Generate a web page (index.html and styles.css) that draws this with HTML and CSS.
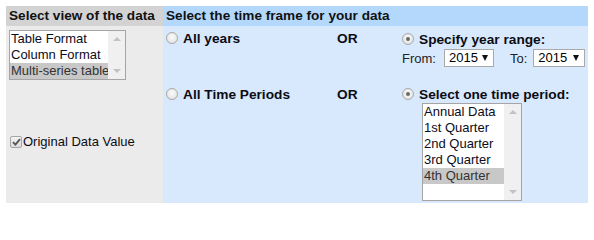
FILE: index.html
```html
<!DOCTYPE html>
<html>
<head>
<meta charset="utf-8">
<link rel="stylesheet" href="styles.css">
</head>
<body>
<div class="panel">
  <div class="hd hd-left">Select view of the data</div>
  <div class="hd hd-right">Select the time frame for your data</div>

  <div class="cell grey top">
    <div class="listbox lb-view">
      <div class="opts">
        <div class="opt">Table Format</div>
        <div class="opt">Column Format</div>
        <div class="opt sel">Multi-series table</div>
      </div>
      <div class="sbar"><span class="arr up"></span><span class="arr down"></span></div>
    </div>
  </div>
  <div class="cell blue c2">
    <label class="choice"><span class="radio"></span><span class="lbl">All years</span></label>
  </div>
  <div class="cell blue c3"><span class="or">OR</span></div>
  <div class="cell blue c4">
    <label class="choice"><span class="radio on"></span><span class="lbl">Specify year range:</span></label>
    <div class="range">
      <span class="from">From:</span>
      <span class="dd">2015<span class="tri"></span></span>
      <span class="to">To:</span>
      <span class="dd">2015<span class="tri"></span></span>
    </div>
  </div>

  <div class="cell grey mid">
    <label class="check"><span class="box"><svg width="9" height="8" viewBox="0 0 9 8"><path d="M1 4.2 L3.4 6.6 L8 1.2" fill="none" stroke="#555" stroke-width="1.8"/></svg></span><span>Original Data Value</span></label>
  </div>
  <div class="cell blue c2 r2">
    <label class="choice"><span class="radio"></span><span class="lbl">All Time Periods</span></label>
  </div>
  <div class="cell blue c3 r2"><span class="or">OR</span></div>
  <div class="cell blue c4 r2">
    <label class="choice"><span class="radio on"></span><span class="lbl">Select one time period:</span></label>
    <div class="listbox lb-period">
      <div class="opts">
        <div class="opt">Annual Data</div>
        <div class="opt">1st Quarter</div>
        <div class="opt">2nd Quarter</div>
        <div class="opt">3rd Quarter</div>
        <div class="opt sel">4th Quarter</div>
      </div>
      <div class="sbar"><span class="arr up"></span><span class="arr down"></span></div>
    </div>
  </div>
</div>
</body>
</html>
```
FILE: styles.css
```css
html, body {
  margin: 0;
  padding: 0;
  background: #ffffff;
}
body {
  padding: 6px;
  font-family: "Liberation Sans", Arial, sans-serif;
  font-size: 13px;
  color: #000;
}
.panel {
  display: grid;
  grid-template-columns: 157px 172px 63px 190px;
  grid-template-rows: 20px 56px 121px;
  width: 582px;
}
.hd {
  font-weight: bold;
  font-size: 13.6px;
  line-height: 20px;
  padding-left: 3px;
  color: #111;
  white-space: nowrap;
}
.hd-left { background: #d3d3d3; }
.hd-right { background: #b3d8fc; grid-column: 2 / 5; }
.grey { background: #ebebeb; }
.blue { background: #d8e9fd; }
.cell { min-width: 0; }
.top { padding: 4px 0 0 3px; }
.mid {
  display: flex;
  align-items: center;
  padding-left: 4px;
}
.c2 { padding: 5px 0 0 3px; }
.c3 { padding: 5px 0 0 2px; }
.c4 { padding: 6px 0 0 4px; }
.r2.c2, .r2.c3 { padding-top: 5px; }
.r2.c4 { padding-top: 5px; }
.choice {
  display: flex;
  align-items: flex-start;
  gap: 5px;
  line-height: 15px;
}
.lbl, .or {
  font-weight: bold;
  font-size: 13.7px;
  line-height: 15px;
  color: #0c0c14;
  white-space: nowrap;
}
.or { display: block; }
.radio {
  box-sizing: border-box;
  width: 12px;
  height: 12px;
  margin-top: 1px;
  border-radius: 50%;
  border: 1px solid #a8a8a8;
  background: radial-gradient(circle at 50% 40%, #fbfbfb 0%, #e6e6e6 70%, #d4d4d4 100%);
  display: flex;
  align-items: center;
  justify-content: center;
  flex: none;
}
.radio.on::after {
  content: "";
  width: 4px;
  height: 4px;
  border-radius: 50%;
  background: #6a6a6a;
}
.range {
  display: flex;
  align-items: center;
  margin-top: 2px;
  height: 18px;
  color: #222;
}
.from { margin-right: 8px; }
.to { margin: 0 6px 0 16px; }
.dd {
  box-sizing: border-box;
  display: flex;
  align-items: center;
  justify-content: space-between;
  width: 50px;
  height: 18px;
  padding: 0 5px 0 4px;
  background: #fff;
  border: 1px solid #a9a9a9;
  color: #000;
  line-height: 16px;
}
.to + .dd { width: 52px; }
.tri {
  width: 0;
  height: 0;
  border-left: 3px solid transparent;
  border-right: 3px solid transparent;
  border-top: 6px solid #111;
}
.check {
  display: flex;
  align-items: center;
  gap: 1px;
  color: #0c0c14;
  margin-top: -2px;
}
.box {
  box-sizing: border-box;
  width: 12px;
  height: 12px;
  border: 1px solid #a6a6a6;
  border-radius: 2px;
  background: linear-gradient(#f4f4f4, #dcdcdc);
  display: flex;
  align-items: center;
  justify-content: center;
}
.listbox {
  box-sizing: border-box;
  display: flex;
  border: 1px solid #a5a5a5;
  background: #fff;
}
.lb-view { width: 117px; height: 50px; }
.lb-period { width: 100px; height: 98px; margin: 1px 0 0 20px; }
.opts { flex: 1; min-width: 0; }
.opt {
  height: 16px;
  line-height: 16px;
  padding-left: 1px;
  white-space: nowrap;
  overflow: hidden;
  color: #0c0c20;
}
.opt.sel { background: #c8c8c8; color: #333; }
.sbar {
  width: 17px;
  flex: none;
  background: #f0f0f0;
  display: flex;
  flex-direction: column;
  justify-content: space-between;
  align-items: center;
  padding: 6px 0;
  box-sizing: border-box;
}
.arr {
  width: 0;
  height: 0;
  border-left: 4px solid transparent;
  border-right: 4px solid transparent;
}
.arr.up { border-bottom: 4px solid #c2c2c2; }
.arr.down { border-top: 4px solid #c2c2c2; }
```
